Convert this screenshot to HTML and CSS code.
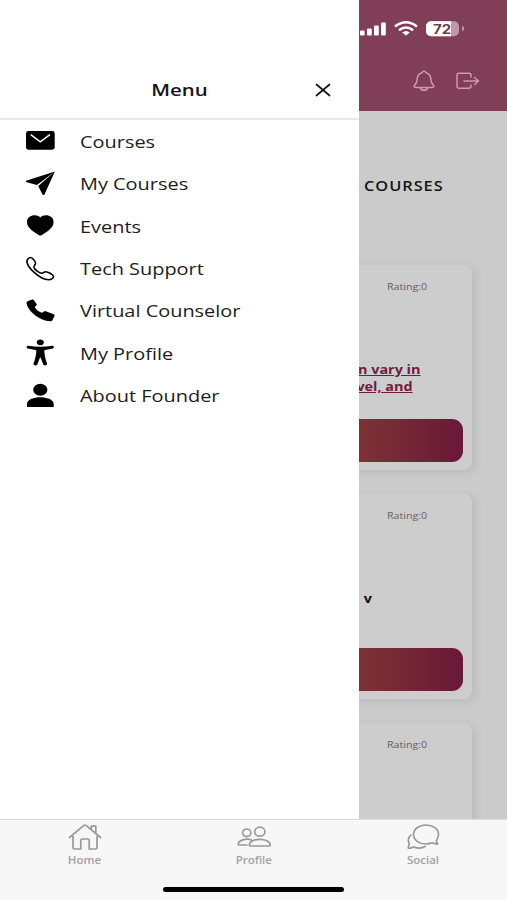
FILE: index.html
```html
<!DOCTYPE html>
<html lang="en">
<head>
<meta charset="utf-8">
<meta name="viewport" content="width=device-width">
<title>Menu</title>
<link rel="stylesheet" href="styles.css">
</head>
<body>
<div class="app">
  <div class="page">
    <header class="topbar">
      <div class="status">
        <svg width="102" height="18" viewBox="0 0 102 18">
          <g fill="#fff"><rect x="1" y="10.500" width="4.600" height="5" rx="1"/><rect x="8" y="8.500" width="4.800" height="7" rx="1"/><rect x="15" y="5.500" width="4.800" height="10" rx="1"/><rect x="22" y="2.500" width="4.800" height="13" rx="1"/></g>
          <g fill="none" stroke="#fff" stroke-width="2.500"><path d="M36 6.500Q47 -2 58 6.500"/><path d="M40 10.300Q47 4.800 54 10.300"/></g>
          <path fill="#fff" d="M43.200 12.500Q47 9.500 50.800 12.500L47 15.500z"/>
          <rect x="67" y="1.200" width="33" height="15" rx="5" fill="#c596a7"/>
          <path fill="#fff" d="M72 1.200h20v15H72a5 5 0 0 1-5-5v-5a5 5 0 0 1 5-5z"/>
        </svg>
        <i class="nub"></i>
        <b class="level">72</b>
      </div>
      <div class="actions">
        <svg width="22" height="22" viewBox="0 0 22 22" fill="none" stroke="#d197b0" stroke-width="1.500" stroke-linejoin="round"><path d="M11 1.200c-1.500 0-1.800.7-2 1.500C5.600 3.600 4.300 6 4.200 9.300 4 13 3 14 1.600 15.400c-.9.900-.5 2 .8 2h17.200c1.300 0 1.700-1.100.8-2C19 14 18 13 17.800 9.300 17.700 6 16.400 3.600 13 2.700c-.2-.8-.5-1.500-2-1.500z"/><path d="M7.500 17.600c.2 3.600 6.800 3.600 7 0"/></svg>
        <svg width="24" height="18" viewBox="0 0 24 18" fill="none" stroke="#d197b0" stroke-width="1.500" stroke-linecap="round" stroke-linejoin="round"><path d="M15 5V3.200C15 2 14 1.200 12.800 1.200H3.200C2 1.200 1 2 1 3.200v11c0 1.200 1 2 2.200 2h9.600c1.200 0 2.200-.8 2.200-2V13"/><path d="M8 9h14M18.500 5.500 22.500 9l-4 3.500"/></svg>
      </div>
    </header>
    <main class="content">
      <h2 class="title"><span>COURSES</span></h2>
      <article class="card">
        <p class="rating"><span>Rating:0</span></p>
        <p class="desc link"><span class="l1">can vary in</span><span class="l2">level, and</span></p>
        <div class="button"></div>
      </article>
      <article class="card">
        <p class="rating"><span>Rating:0</span></p>
        <p class="desc plain"><span>v</span></p>
        <div class="button"></div>
      </article>
      <article class="card">
        <p class="rating"><span>Rating:0</span></p>
      </article>
    </main>
  </div>

  <aside class="drawer">
    <div class="drawer-head">
      <h1><span>Menu</span></h1>
      <svg class="close" width="16" height="14" viewBox="0 0 16 14" fill="none" stroke="#151515" stroke-width="1.700" stroke-linecap="round"><path d="M1.500 1.500l13 11M14.500 1.500l-13 11"/></svg>
    </div>
    <nav class="menu">
      <a><svg viewBox="0 0 33 30"><rect x="2" y="5" width="28.700" height="18.700" rx="2.400"/><path d="M6.700 8.600l9.600 7.200 9.600-7.200" fill="none" stroke="#fff" stroke-width="1.500"/></svg><span>Courses</span></a>
      <a><svg viewBox="0 0 33 30"><path d="M30.900 2.500 2 11.700v1.300l10.900 3zM30.900 2.500 14.200 17l4.600 9h1.400z"/></svg><span>My Courses</span></a>
      <a><svg viewBox="0 0 33 30"><path d="M16.300 6.400C13.500 2.900 3 2.800 3 11.300c0 6.200 8 10.200 11.600 12.600q1.700 1.100 3.400 0c3.600-2.400 11.600-6.400 11.600-12.600 0-8.500-10.500-8.400-13.300-4.900z"/></svg><span>Events</span></a>
      <a><svg viewBox="0 0 33 30"><path d="M3 6.800C3.500 5 5 3.700 6.500 3.500c2-.2 5 4.300 5.100 5.800.1 1.600-2 2-1.600 3.900.6 2.500 4.600 5.500 7.300 6 1.900.3 2.600-1.400 4.500-1.400 2 0 7.800 3 7.800 4.700 0 1.300-2.600 3.200-4.700 3.300-4.400.1-11-3.900-15-7.600C6.300 15.100 2.200 9.800 3 6.800z" fill="none" stroke="#000" stroke-width="1.600"/></svg><span>Tech Support</span></a>
      <a><svg viewBox="0 0 33 30"><path d="M8.100 3.600q1.200-.5 1.700.4l2.900 4.300q.4.700-.4 1.300l-1.500 1.500c.8 2.100 4.200 5 7 5.700l2.400-1.400q.8-.5 1.600-.1l8 3q1.200.5.800 1.500l-2.200 4.400q-.5 1-1.800 1c-5.300.2-11.600-2.500-16.400-6.600C5.700 14.700 3 10.700 2.500 6.900q-.1-1.100 1-1.600z"/></svg><span>Virtual Counselor</span></a>
      <a><svg viewBox="0 0 33 30"><ellipse cx="16.300" cy="4.300" rx="3.500" ry="2.900"/><path d="M4.200 7.700c-1.600-.2-2.100 2.400-.5 2.800l7.700 1.600c.8.200 1 .7.900 1.400-.3 4.300-1.300 8.300-2.800 12.300-.5 1.600 3.200 2.500 3.800.8l2.500-6.600q.5-1 1 0l2.500 6.600c.6 1.700 4.300.8 3.800-.8-1.500-4-2.500-8-2.800-12.300-.1-.7.100-1.200.9-1.400l7.700-1.600c1.600-.4 1.100-3-.5-2.800-8 1.300-16.200 1.300-24.200 0z"/></svg><span>My Profile</span></a>
      <a><svg viewBox="0 0 33 30"><ellipse cx="16.300" cy="8.700" rx="7.100" ry="6"/><path d="M3 26v-3c0-4.700 7.500-6.700 13.300-6.700s13.400 2 13.400 6.700v3z"/></svg><span>About Founder</span></a>
    </nav>
  </aside>

  <footer class="tabs">
    <div class="tabrow">
      <a><svg viewBox="0 0 36 28"><path d="M2.500 14.500 16.600 2.700q1.400-1.100 2.800 0L33.500 14.500M6 11.500v13.200q0 1.300 1.400 1.300h6.400v-8.700q0-1.300 1.400-1.300h5.600q1.400 0 1.400 1.300V26h6.400q1.400 0 1.400-1.300V11.500M28.800 10V3.200h-4.500v3.200"/></svg><span>Home</span></a>
      <a><svg viewBox="0 0 36 28"><ellipse cx="23.800" cy="8.700" rx="5.100" ry="4.500"/><ellipse cx="10.700" cy="9.800" rx="4.200" ry="3.800"/><path d="M13.300 22.300c0-4 5.600-6 10.500-6s10.500 2 10.500 6q-.1.700-1 .7H14.300q-.9 0-1-.7zM15.300 17c-5.100-2-13 .2-13.100 4.300q0 .7.900.7h7.900"/></svg><span>Profile</span></a>
      <a><svg viewBox="0 0 36 28"><path d="M31.300 18.500c-.5-1 2.200-3.100 2.200-7C33.500 6 28 2 21 2S8.500 6.200 8.500 11.600 14 21 21 21c3.500 0 5.300-1.200 6.300-1.200 1.300 0 3.700 1.700 5.100 1.400 1-.3-.9-1.700-1.100-2.700zM5.800 12c-3.200 3.200-2.500 6.500-1.700 8.100.6 1.700-1.100 3.700-.8 4.900.3 1 3.300-.5 4.800-.9 1.300-.4 2.400 1 5.900 1 2.600 0 4.600-.7 6.300-1.800"/></svg><span>Social</span></a>
    </div>
    <div class="home-indicator"></div>
  </footer>
</div>
</body>
</html>
```
FILE: styles.css
```css
* { box-sizing: border-box; }
body { margin: 0; font-family: "Open Sans", sans-serif; background: #fff; }
h1, h2, p { margin: 0; font-size: inherit; font-weight: inherit; }
svg { display: block; flex: none; }
span { white-space: nowrap; }

.app { position: relative; width: 507px; height: 900px; overflow: hidden; display: flex; flex-direction: column; }
.page { height: 819px; overflow: hidden; background: #cbcbcb; }

.topbar { height: 111px; background: #813e57; padding: 20px 27px 0 359px; display: flex; flex-direction: column; }
.status { position: relative; display: flex; align-items: center; height: 18px; }
.nub { width: 1.5px; height: 5px; margin: 0 0 1px 1px; border-radius: 0 2px 2px 0; background: #c596a7; flex: none; }
.level { position: absolute; left: 74px; top: 1px; font: 700 13px/16px Inter, sans-serif; color: #6d3e50; transform: scaleX(1.15); transform-origin: 0 0; }
.actions { display: flex; justify-content: flex-end; align-items: center; gap: 21px; height: 22px; margin-top: 32px; }

.content { padding: 64px 35px 0; }
.content .title { height: 90px; padding-left: 329px; font-size: 14px; line-height: 22px; font-weight: 600; color: #151515; letter-spacing: .8px; }
.title span { display: inline-block; transform: scaleX(1.17); transform-origin: 0 50%; }
.card { height: 205px; margin-bottom: 24.2px; padding: 13px 9px 8px; border-radius: 8px; background: #cdcdcd; box-shadow: 3px 2px 10px rgba(0,0,0,.09); display: flex; flex-direction: column; }
.card .rating { padding-left: 343px; height: 18px; font-size: 9px; line-height: 18px; color: #626262; }
.rating span { display: inline-block; transform: scaleX(1.18); transform-origin: 0 50%; }
.card .desc { font-weight: 700; font-size: 12px; line-height: 17px; display: flex; flex-direction: column; align-items: flex-end; }
.desc span { transform: scaleX(1.2); transform-origin: 100% 50%; }
.card .link { margin-top: 65px; padding-right: 43px; color: #701d3d; text-decoration: underline; }
.link .l2 { margin-right: 7px; }
.card .plain { margin-top: 65px; padding-right: 91px; color: #111; }
.button { height: 43px; margin-top: auto; border-radius: 11px; background: linear-gradient(90deg, #87502b 0%, #7d3434 74%, #6a1838 100%); }

.drawer { position: absolute; left: 0; top: 0; width: 359px; height: 819px; background: #fff; }
.drawer-head { position: relative; height: 120px; padding-top: 79px; border-bottom: 2px solid #e8e8e8; text-align: center; font-size: 17px; line-height: 22px; font-weight: 600; color: #151515; }
.drawer-head span { display: inline-block; transform: scaleX(1.2); }
.close { position: absolute; left: 315px; top: 83px; }
.menu a { display: flex; align-items: center; height: 42.45px; gap: 23px; padding-left: 24px; font-size: 16px; color: #1d1d1d; }
.menu svg { width: 33px; height: 30px; fill: #000; }
.menu span { padding-top: 1px; transform: scaleX(1.245); transform-origin: 0 50%; }

.tabs { height: 81px; border-top: 1px solid #dedede; background: #f7f7f7; display: flex; flex-direction: column; align-items: center; }
.tabrow { align-self: stretch; display: grid; grid-template-columns: repeat(3, 1fr); height: 67px; padding-top: 3px; }
.tabrow a { display: flex; flex-direction: column; align-items: center; font-size: 10px; line-height: 14px; font-weight: 600; color: #a2a2a2; }
.tabrow svg { width: 36px; height: 28px; margin-bottom: 2px; fill: none; stroke: #999; stroke-width: 1.7; stroke-linejoin: round; stroke-linecap: round; }
.tabrow span { transform: scaleX(1.15); }
.home-indicator { width: 181px; height: 5px; border-radius: 3px; background: #000; }
```
